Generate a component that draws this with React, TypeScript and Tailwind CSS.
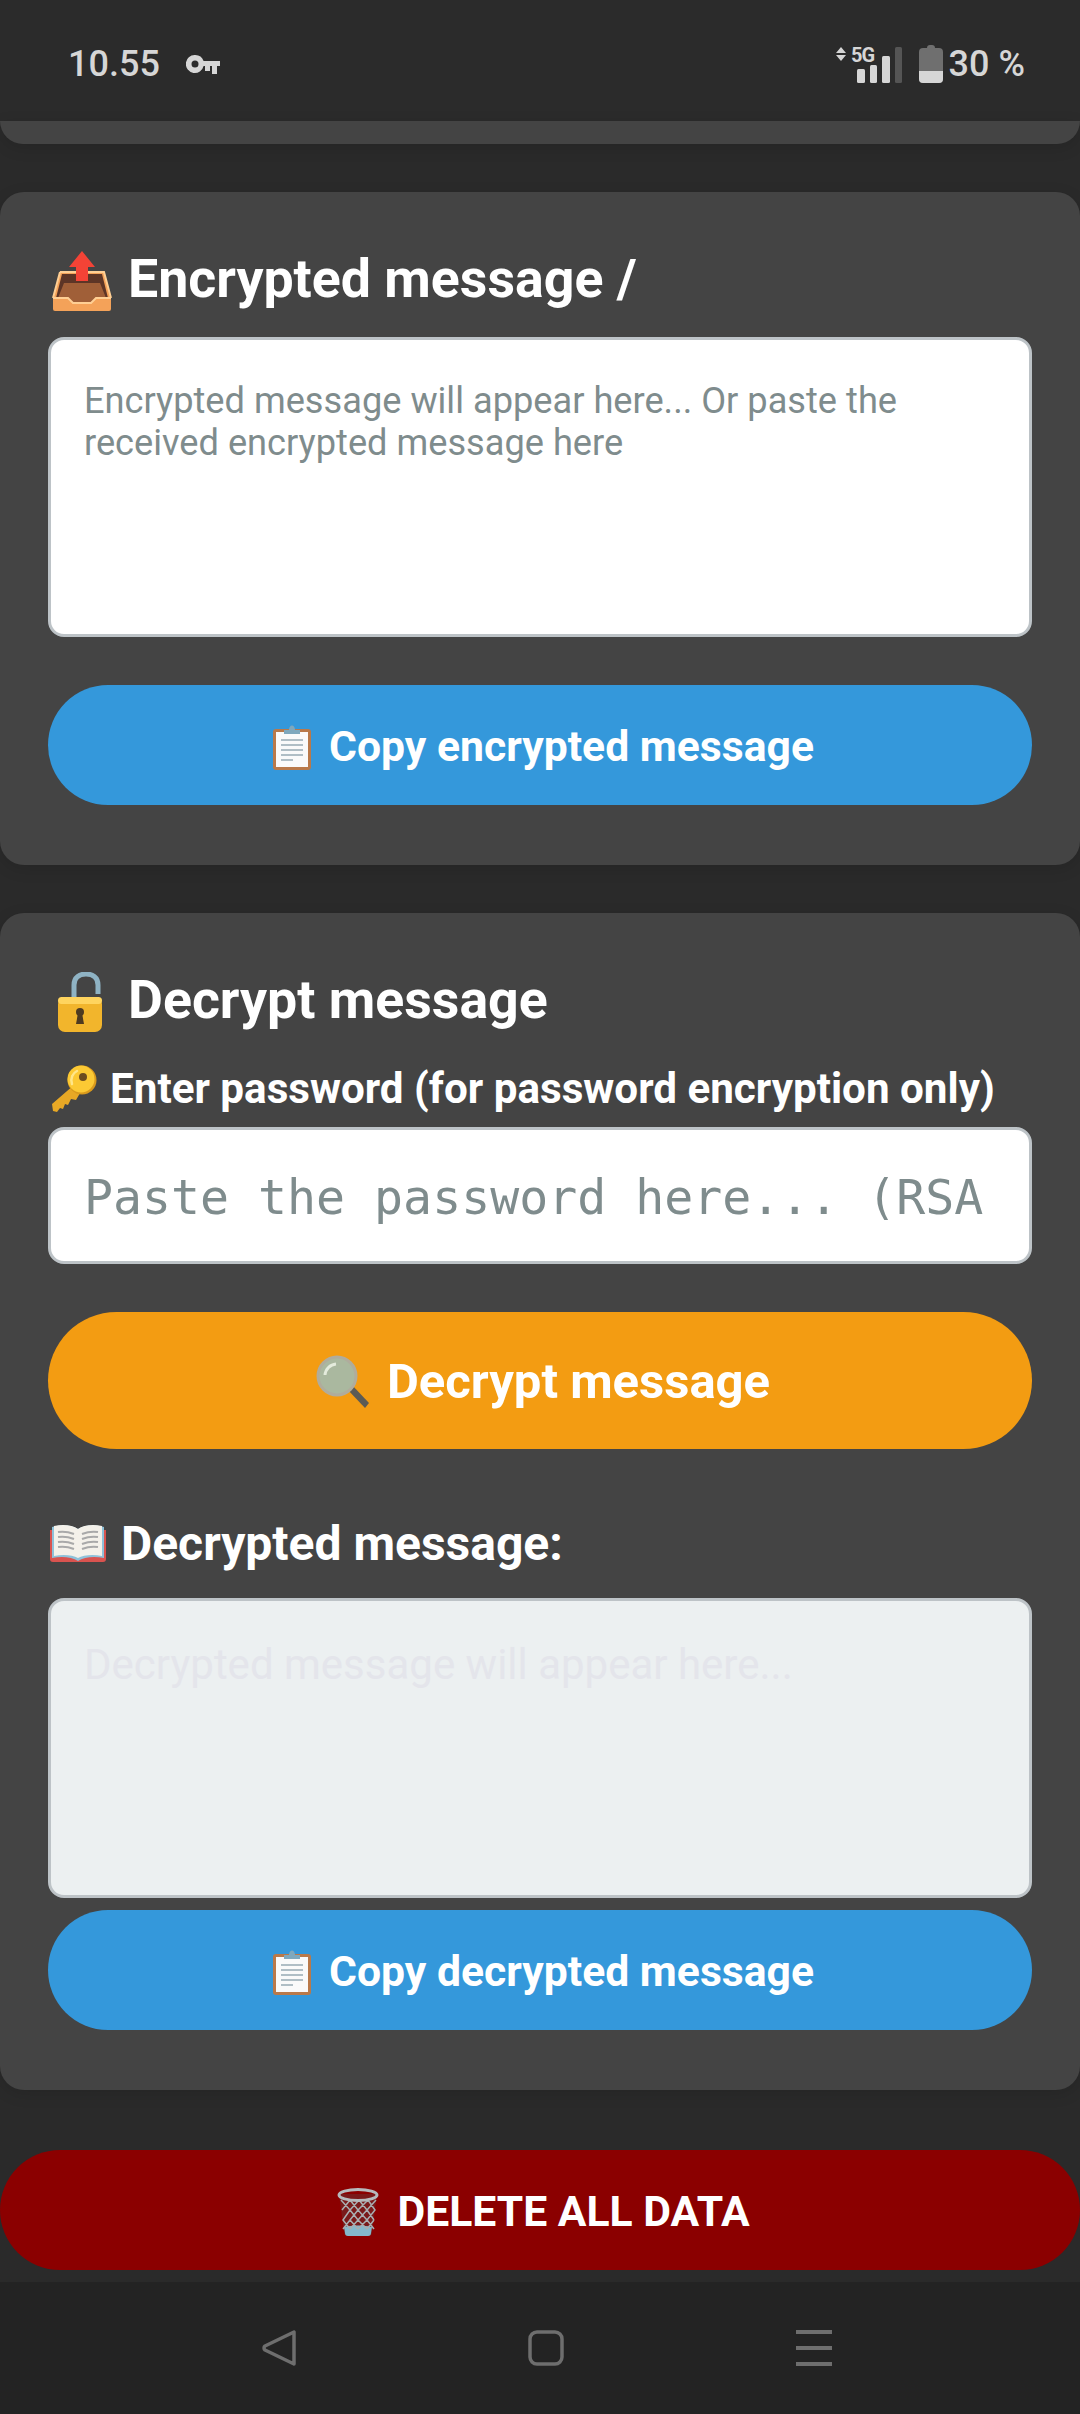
const sans = 'font-["Roboto","Noto_Sans",sans-serif]';

function OutboxEmoji() {
  return (
    <svg viewBox="0 0 60 60" className="ml-[4px] h-[60px] w-[60px] shrink-0">
      <path d="M8 21h44l7 26v11a2 2 0 0 1-2 2H3a2 2 0 0 1-2-2V47z" fill="#f4a259" />
      <path d="M10 23h40l6 24H44l-5 5H21l-5-5H4z" fill="#5d3526" />
      <path d="M12 32h36l6 15H44l-5 5H21l-5-5H6z" fill="#a05f38" />
      <path d="M8 21h44l7 26M8 21L1 47" fill="none" stroke="#ffcf94" strokeWidth="2" />
      <path d="M1 47h15l5 5h18l5-5h15" fill="none" stroke="#ffcf94" strokeWidth="2" />
      <path d="M30 0l13 16h-7v14H24V16h-7z" fill="#f44336" />
    </svg>
  );
}

function ClipboardEmoji() {
  return (
    <svg viewBox="0 0 40 46" className="h-[46px] w-[40px] shrink-0">
      <rect x="1" y="5" width="38" height="41" rx="3" fill="#b9794a" />
      <rect x="4" y="8" width="32" height="35" fill="#fafafa" />
      <path d="M9 16h22M9 21h22M9 26h22M9 31h22M9 36h12" stroke="#b0bec5" strokeWidth="2" />
      <path d="M12 10V6h5c0-6 6-6 6 0h5v4z" fill="#7fa8bd" />
    </svg>
  );
}

function LockEmoji() {
  return (
    <svg viewBox="0 0 46 60" className="h-[60px] w-[46px] shrink-0">
      <path d="M17 27V13C17 5 23 2 29 2s12 3 12 11v9" fill="none" stroke="#8fb3c4" strokeWidth="5" />
      <rect x="1" y="25" width="44" height="35" rx="7" fill="#f2b52c" />
      <rect x="1" y="25" width="44" height="7" rx="3.5" fill="#ffd45e" />
      <circle cx="23" cy="40" r="4" fill="#4e3a20" />
      <path d="M21 41h4l2 11h-8z" fill="#4e3a20" />
    </svg>
  );
}

function KeyEmoji() {
  return (
    <svg viewBox="0 0 48 48" className="ml-[2px] h-[48px] w-[48px] shrink-0">
      <path d="M24 20L2 39l1 7 4 1 3-4 3 1 2-5 3 1 3-6 5 1 7-12z" fill="#e8a825" />
      <circle cx="32" cy="15" r="14.5" fill="#d99a1c" />
      <circle cx="31" cy="14" r="13.5" fill="#fcc934" />
      <path d="M22 19c-2-6 1-11 5-13" fill="none" stroke="#ffe68a" strokeWidth="2.5" strokeLinecap="round" />
      <circle cx="33" cy="12" r="4" fill="#6d4c1f" />
    </svg>
  );
}

function MagnifierEmoji() {
  return (
    <svg viewBox="0 0 54 54" className="h-[54px] w-[54px] shrink-0">
      <path d="M31 34l5-4 17 18-4 5z" fill="#5b5b55" />
      <circle cx="21" cy="21" r="19" fill="#aab89f" stroke="#b0ac9c" strokeWidth="3" />
      <path d="M9 20a12 12 0 0 1 11-11" fill="none" stroke="#e4ebdc" strokeWidth="3" />
    </svg>
  );
}

function BookEmoji() {
  return (
    <svg viewBox="0 0 56 40" className="ml-[2px] h-[40px] w-[56px] shrink-0">
      <path d="M0 6h28v32H3a3 3 0 0 1-3-3zM28 6h28v29a3 3 0 0 1-3 3H28z" fill="#d9534f" />
      <path d="M2 34V3c10-3 20-2 26 2 6-4 16-5 26-2v31c-10-2-20-1-26 3-6-4-16-5-26-3z" fill="#8fc1d9" />
      <path d="M4 32V2c9-2 19-1 24 3v29c-5-3-15-4-24-2zM52 32V2c-9-2-19-1-24 3v29c5-3 15-4 24-2z" fill="#f4f1ea" />
      <path d="M8 8c6-1 11 0 16 2M8 13c6-1 11 0 16 2M8 18c6-1 11 0 16 2M8 23c6-1 11 0 16 2M48 8c-6-1-11 0-16 2M48 13c-6-1-11 0-16 2M48 18c-6-1-11 0-16 2M48 23c-6-1-11 0-16 2" fill="none" stroke="#a9a9a9" strokeWidth="2" />
    </svg>
  );
}

function TrashEmoji() {
  return (
    <svg viewBox="0 0 44 48" className="h-[48px] w-[44px] shrink-0">
      <path d="M3 6l5 38a4 4 0 0 0 4 4h20a4 4 0 0 0 4-4l5-38z" fill="#7a1a1a" />
      <path d="M8 39c8-2 20-2 28 0l-1 6a3 3 0 0 1-3 3H12a3 3 0 0 1-3-3z" fill="#84b8cc" />
      <path d="M5 12l9 10-7 10 7 9M14 12l8 10-8 10 8 9M23 12l8 10-9 10 9 9M32 12l7 10-8 10 7 9M14 12l-8 10M23 12l-9 10M32 12l-10 10M40 12l-9 10M14 22l8 10M22 22l9 10M31 22l7 10M14 32l-7 9M22 32l-8 9M31 32l-9 9M38 32l-7 9" fill="none" stroke="#a9adb0" strokeWidth="1.5" />
      <ellipse cx="22" cy="7" rx="19" ry="5.5" fill="none" stroke="#b6babd" strokeWidth="3" />
    </svg>
  );
}

function StatusIcons() {
  return (
    <svg viewBox="0 0 110 40" className="h-[40px] w-[110px]">
      <path d="M1 9l5-6 5 6zM1 11h10l-5 6z" fill="#d6d6d6" />
      <text x="16" y="18" fontFamily="Roboto" fontWeight="700" fontSize="20" letterSpacing="-1" fill="#d6d6d6">5G</text>
      <rect x="22" y="25" width="8" height="14" rx="1.5" fill="#d6d6d6" />
      <rect x="35" y="21" width="7" height="18" rx="1.5" fill="#d6d6d6" />
      <rect x="47" y="12" width="8" height="27" rx="1.5" fill="#d6d6d6" />
      <rect x="60" y="3" width="7" height="36" rx="1.5" fill="#555555" />
      <path d="M92 4c0-2 1-3 3-3h2c2 0 3 1 3 3h4a4 4 0 0 1 4 4v27a4 4 0 0 1-4 4H88a4 4 0 0 1-4-4V8a4 4 0 0 1 4-4z" fill="#6f6f6f" />
      <path d="M84 27h24v8a4 4 0 0 1-4 4H88a4 4 0 0 1-4-4z" fill="#d6d6d6" />
    </svg>
  );
}

function Title({ icon, text }: { icon: React.ReactNode; text: string }) {
  return (
    <h2 className="flex items-center gap-[16px] text-[53.7px] leading-[81px] font-bold text-white">
      {icon}
      <span className="-translate-y-[2px]">{text}</span>
    </h2>
  );
}

function Pill({ icon, label, color, height, size }: { icon: React.ReactNode; label: string; color: string; height: string; size: string }) {
  return (
    <button className={`flex w-full items-center justify-center gap-[17px] rounded-full pt-[3px] pl-[6px] font-bold text-white ${color} ${height} ${size}`}>
      {icon}
      <span>{label}</span>
    </button>
  );
}

export default function App() {
  return (
    <div className={`flex h-[2414px] w-[1080px] flex-col overflow-hidden bg-[#2a2a2a] ${sans}`}>
      {/* Status bar */}
      <header className="flex h-[121px] shrink-0 items-center justify-between bg-[#2b2b2b] pt-[6px] pr-[55px] pl-[68px] text-[36px] font-medium text-[#d6d6d6]">
        <div className="flex items-center gap-[26px]">
          <span>10.55</span>
          <svg viewBox="0 0 34 20" className="mt-[3px] h-[20px] w-[34px]">
            <path d="M9 0a9 9 0 0 1 8.6 6H34v5h-3v8h-5v-8h-2v5h-5v-5h-1.4A9 9 0 1 1 9 0zm0 5.5a3.5 3.5 0 1 0 0 7 3.5 3.5 0 0 0 0-7z" fill="#d6d6d6" fillRule="evenodd" />
          </svg>
        </div>
        <div className="flex items-center gap-[4px]">
          <StatusIcons />
          <span>30 %</span>
        </div>
      </header>

      <main className="flex min-h-0 flex-1 flex-col">
        <div className="h-[23px] shrink-0 rounded-b-[24px] bg-[#444444] shadow-[0_4px_16px_rgba(0,0,0,0.12)]" />

        {/* Encrypted message */}
        <section className="mt-[48px] rounded-[24px] bg-[#444444] px-[48px] pt-[48px] pb-[60px] shadow-[0_4px_16px_rgba(0,0,0,0.12)]">
          <Title icon={<OutboxEmoji />} text="Encrypted message /" />
          <textarea
            readOnly
            placeholder="Encrypted message will appear here... Or paste the received encrypted message here"
            className="mt-[16px] block h-[300px] w-full resize-none rounded-[16px] border-[3px] border-[#bdc3c7] bg-white px-[33px] py-[40px] text-[36.2px] leading-[42px] placeholder:text-[#7f8c8d]"
          />
          <div className="mt-[48px]">
            <Pill icon={<ClipboardEmoji />} label="Copy encrypted message" color="bg-[#3498db]" height="h-[120px]" size="text-[42.7px]" />
          </div>
        </section>

        {/* Decrypt message */}
        <section className="mt-[48px] rounded-[24px] bg-[#444444] px-[48px] pt-[48px] pb-[60px] shadow-[0_4px_16px_rgba(0,0,0,0.12)]">
          <Title icon={<span className="flex w-[64px] justify-center"><LockEmoji /></span>} text="Decrypt message" />
          <label className="mt-[15px] flex h-[63px] items-center gap-[12px] text-[42.2px] font-bold text-white">
            <KeyEmoji />
            <span>Enter password (for password encryption only)</span>
          </label>
          <input
            readOnly
            placeholder="Paste the password here... (RSA"
            className="mt-[7px] block h-[137px] w-full rounded-[16px] border-[3px] border-[#bdc3c7] bg-white px-[33px] pt-[3px] font-['DejaVu_Sans_Mono',monospace] text-[48.2px] placeholder:text-[#7f8c8d]"
          />
          <div className="mt-[48px]">
            <Pill icon={<MagnifierEmoji />} label="Decrypt message" color="bg-[#f39c12]" height="h-[137px]" size="text-[49px]" />
          </div>
          <h3 className="mt-[59px] flex h-[71px] items-center gap-[15px] text-[48px] font-bold text-white">
            <BookEmoji />
            <span>Decrypted message:</span>
          </h3>
          <textarea
            readOnly
            disabled
            placeholder="Decrypted message will appear here..."
            className="mt-[19px] block h-[300px] w-full resize-none rounded-[16px] border-[3px] border-[#bdc3c7] bg-[#ecf0f1] px-[33px] py-[39px] text-[42px] leading-[49px] placeholder:text-[#e4e5eb]"
          />
          <div className="mt-[12px]">
            <Pill icon={<ClipboardEmoji />} label="Copy decrypted message" color="bg-[#3498db]" height="h-[120px]" size="text-[42.7px]" />
          </div>
        </section>

        <div className="mt-[60px]">
          <Pill icon={<TrashEmoji />} label="DELETE ALL DATA" color="bg-[#8b0000]" height="h-[120px]" size="text-[42.7px]" />
        </div>
      </main>

      {/* Navigation bar */}
      <nav className="flex h-[132px] shrink-0 items-start justify-center gap-[232px] bg-[#232323] pt-[48px] pl-[14px]">
        <svg viewBox="0 0 34 36" className="h-[36px] w-[34px]" fill="none" stroke="#6e6e6e" strokeWidth="3.5" strokeLinejoin="round">
          <path d="M32 2v32L3 20a2.5 2.5 0 0 1 0-4z" />
        </svg>
        <svg viewBox="0 0 36 36" className="h-[36px] w-[36px]" fill="none" stroke="#6e6e6e" strokeWidth="3.5">
          <rect x="2" y="2" width="32" height="32" rx="7" />
        </svg>
        <svg viewBox="0 0 36 36" className="h-[36px] w-[36px]" fill="#6e6e6e">
          <rect y="0" width="36" height="4" />
          <rect y="16" width="36" height="4" />
          <rect y="32" width="36" height="4" />
        </svg>
      </nav>
    </div>
  );
}
